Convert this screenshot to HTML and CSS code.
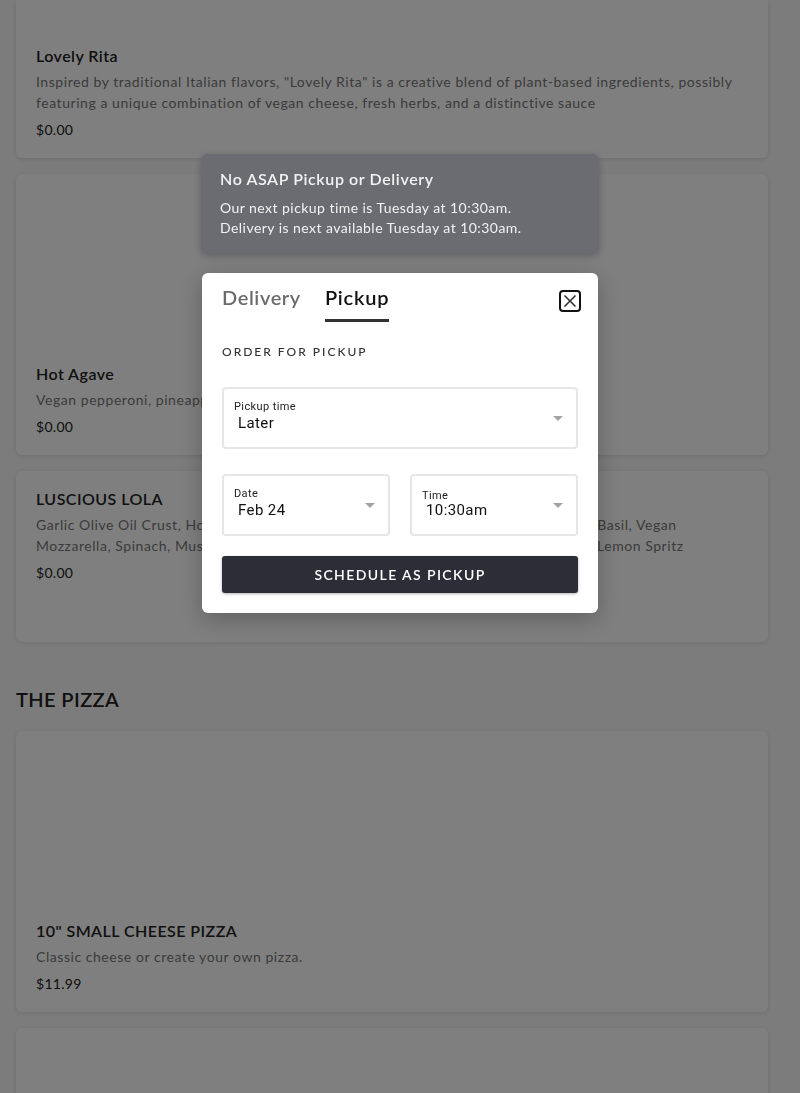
FILE: index.html
```html
<!DOCTYPE html>
<html lang="en">
<head>
<meta charset="utf-8">
<title>Menu</title>
<link rel="stylesheet" href="styles.css">
</head>
<body>
<main class="menu">
  <article class="card card--scrolled">
    <div class="card-image card-image--cut"></div>
    <h3 class="card-title">Lovely Rita</h3>
    <p class="card-desc">Inspired by traditional Italian flavors, "Lovely Rita" is a creative blend of plant-based ingredients, possibly featuring a unique combination of vegan cheese, fresh herbs, and a distinctive sauce</p>
    <p class="card-price">$0.00</p>
  </article>
  <article class="card">
    <div class="card-image"></div>
    <h3 class="card-title">Hot Agave</h3>
    <p class="card-desc">Vegan pepperoni, pineapple, jalapeño, red onion, agave drizzle</p>
    <p class="card-price">$0.00</p>
  </article>
  <article class="card card--plain">
    <h3 class="card-title">LUSCIOUS LOLA</h3>
    <p class="card-desc">Garlic Olive Oil Crust, Honey, House-Made Cashew Ricotta, Roasted Tomatoes, Thai Basil, Vegan Mozzarella, Spinach, Mushrooms, Caramelized Onions, Red Pepper Flakes, Olive Oil, Lemon Spritz</p>
    <p class="card-price">$0.00</p>
  </article>

  <h2 class="section-title">THE PIZZA</h2>

  <article class="card">
    <div class="card-image"></div>
    <h3 class="card-title">10" SMALL CHEESE PIZZA</h3>
    <p class="card-desc">Classic cheese or create your own pizza.</p>
    <p class="card-price">$11.99</p>
  </article>
  <article class="card">
    <div class="card-image"></div>
    <h3 class="card-title">14" LARGE CHEESE PIZZA</h3>
    <p class="card-desc">Classic cheese or create your own pizza.</p>
    <p class="card-price">$17.99</p>
  </article>
</main>

<div class="overlay">
  <div class="toast">
    <div class="toast-title">No ASAP Pickup or Delivery</div>
    <p class="toast-text">Our next pickup time is Tuesday at 10:30am.<br>Delivery is next available Tuesday at 10:30am.</p>
  </div>

  <div class="modal">
    <div class="modal-head">
      <div class="tabs">
        <span class="tab">Delivery</span>
        <span class="tab tab--active">Pickup</span>
      </div>
      <button class="close" aria-label="Close">
        <svg width="22" height="22" viewBox="0 0 22 22">
          <rect x="1" y="1" width="20" height="20" rx="3" fill="none" stroke="#111" stroke-width="2"/>
          <path d="M5.5 5.5 L16.5 16.5 M16.5 5.5 L5.5 16.5" stroke="#333" stroke-width="1.6" fill="none"/>
        </svg>
      </button>
    </div>

    <div class="order-label">ORDER FOR PICKUP</div>

    <div class="field">
      <span class="field-label">Pickup time</span>
      <span class="field-value">Later</span>
      <span class="caret"></span>
    </div>

    <div class="field-row">
      <div class="field">
        <span class="field-label">Date</span>
        <span class="field-value">Feb 24</span>
        <span class="caret"></span>
      </div>
      <div class="field">
        <span class="field-label field-label--low">Time</span>
        <span class="field-value">10:30am</span>
        <span class="caret"></span>
      </div>
    </div>

    <button class="submit">SCHEDULE AS PICKUP</button>
  </div>
</div>
</body>
</html>
```

FILE: styles.css
```css
* { box-sizing: border-box; }

html, body {
  margin: 0;
  padding: 0;
}

body {
  background: #f9f9f9;
  font-family: "Lato", "Noto Sans", sans-serif;
  color: #222;
  height: 1093px;
  overflow: hidden;
}

.menu {
  padding: 0 32px 0 16px;
  display: flex;
  flex-direction: column;
}

.card {
  background: #fff;
  border-radius: 6px;
  box-shadow: 0 1px 5px rgba(0, 0, 0, 0.12);
  padding: 16px 20px 18px;
  margin-bottom: 16px;
}

.card--scrolled {
  border-top-left-radius: 0;
  border-top-right-radius: 0;
  padding-top: 0;
}

.card--plain {
  min-height: 171px;
}

.card-image {
  height: 172px;
}

.card-image--cut {
  height: 44px;
}

.card-title {
  margin: 0 0 3px;
  font-size: 16px;
  line-height: 24px;
  font-weight: 600;
  letter-spacing: 0.45px;
  color: #222;
}

.card-desc {
  margin: 0;
  font-size: 14px;
  line-height: 21px;
  color: #777;
  letter-spacing: 0.55px;
}

.card-price {
  margin: 6px 0 0;
  font-size: 14px;
  line-height: 21px;
  letter-spacing: 0.3px;
  color: #222;
}

.section-title {
  margin: 27px 0 18px;
  font-size: 20px;
  line-height: 28px;
  font-weight: 600;
  letter-spacing: 0.4px;
  color: #222;
}

/* overlay + dialogs */
.overlay {
  position: fixed;
  inset: 0;
  background: rgba(0, 0, 0, 0.5);
  display: flex;
  flex-direction: column;
  align-items: center;
  padding-top: 154px;
  gap: 20px;
}

.toast {
  width: 398px;
  background: #6b6c71;
  border-radius: 6px;
  box-shadow: 0 3px 8px rgba(0, 0, 0, 0.25);
  padding: 13px 19px 15px;
  color: #f2f2f2;
}

.toast-title {
  font-size: 16px;
  line-height: 24px;
  font-weight: 600;
  letter-spacing: 0.6px;
}

.toast-text {
  margin: 7px 0 0;
  font-size: 14px;
  line-height: 20px;
  letter-spacing: 0.45px;
}

.modal {
  width: 396px;
  background: #fff;
  border-radius: 6px;
  padding: 0 20px 20px;
  box-shadow: 0 6px 24px rgba(0, 0, 0, 0.25);
}

.modal-head {
  display: flex;
  justify-content: space-between;
  align-items: flex-start;
}

.tabs {
  display: flex;
  gap: 24px;
}

.tab {
  font-size: 20px;
  line-height: 24px;
  font-weight: 600;
  letter-spacing: 0.6px;
  color: #6b6b6b;
  padding: 12px 0 10px;
  border-bottom: 3px solid transparent;
}

.tab--active {
  color: #111;
  border-bottom-color: #333;
  letter-spacing: 0.8px;
}

.close {
  background: none;
  border: 0;
  padding: 0;
  margin: 17px -3px 0 0;
  width: 22px;
  height: 22px;
  display: block;
  cursor: pointer;
}

.close svg { display: block; }

.order-label {
  margin-top: 22px;
  font-size: 12px;
  line-height: 16px;
  letter-spacing: 2px;
  font-weight: 500;
  color: #333;
}

.field {
  position: relative;
  height: 62px;
  border: 2px solid #e6e6e6;
  border-radius: 4px;
  padding: 11px 10px 0;
  display: flex;
  flex-direction: column;
  font-family: "Roboto", "Liberation Sans", sans-serif;
}

.modal > .field {
  margin-top: 27px;
}

.field-label {
  font-size: 11px;
  line-height: 13px;
  color: #222;
  letter-spacing: 0.4px;
}

.field-label--low {
  margin-top: 2px;
  margin-bottom: -2px;
}

.field-value {
  margin-top: 1px;
  padding-left: 4px;
  font-size: 15px;
  line-height: 18px;
  color: #111;
  letter-spacing: 0.4px;
}

.caret {
  position: absolute;
  right: 13px;
  top: 27px;
  width: 0;
  height: 0;
  border-left: 5px solid transparent;
  border-right: 5px solid transparent;
  border-top: 5px solid #a3a3a3;
}

.field-row {
  display: grid;
  grid-template-columns: 1fr 1fr;
  gap: 20px;
  margin-top: 25px;
}

.submit {
  display: block;
  width: 100%;
  margin-top: 20px;
  height: 37px;
  border: 0;
  border-radius: 3px;
  background: #2d2d37;
  color: #fff;
  font-family: "Lato", "Noto Sans", sans-serif;
  font-size: 14px;
  font-weight: 600;
  letter-spacing: 1.4px;
  box-shadow: 0 1px 3px rgba(0, 0, 0, 0.3);
}
```
